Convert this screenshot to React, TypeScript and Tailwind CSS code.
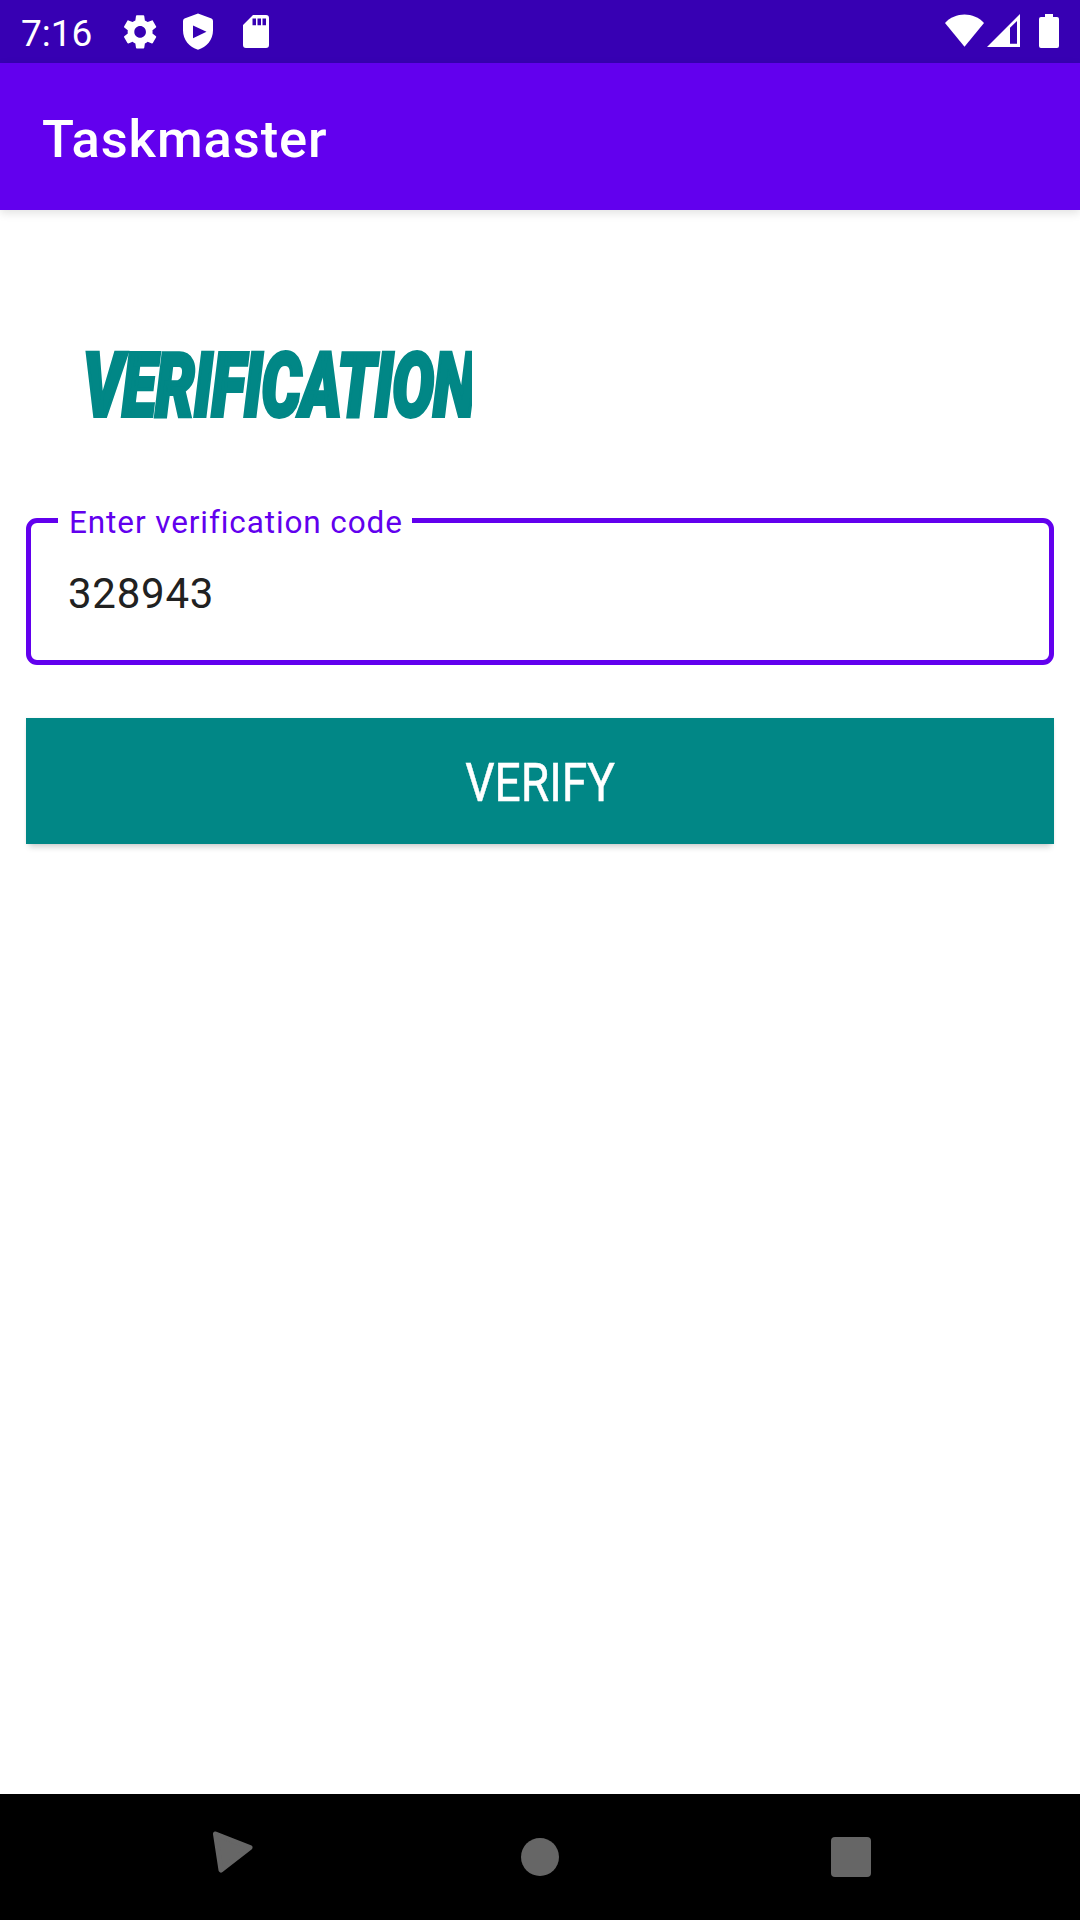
import React from "react";

function StatusBar() {
  return (
    <div className="flex h-[63px] items-center bg-[#3700b3] text-white">
      <div className="flex w-[123px] items-center pl-[21px]">
        <span className="relative top-[2px] text-[37px] leading-none">7:16</span>
      </div>
      <svg className="h-[63px] w-[160px]" viewBox="123 0 160 63" fill="currentColor">
        <g transform="translate(120.2 12) scale(1.66)">
          <path d="M19.43 12.98c.04-.32.07-.64.07-.98s-.03-.66-.07-.98l2.11-1.65c.19-.15.24-.42.12-.64l-2-3.46c-.12-.22-.39-.3-.61-.22l-2.49 1c-.52-.4-1.08-.73-1.69-.98l-.38-2.65C14.46 2.18 14.25 2 14 2h-4c-.25 0-.46.18-.49.42l-.38 2.65c-.61.25-1.17.59-1.69.98l-2.49-1c-.23-.09-.49 0-.61.22l-2 3.46c-.13.22-.07.49.12.64l2.11 1.65c-.04.32-.07.65-.07.98s.03.66.07.98l-2.11 1.65c-.19.15-.24.42-.12.64l2 3.46c.12.22.39.3.61.22l2.49-1c.52.4 1.08.73 1.69.98l.38 2.65c.03.24.24.42.49.42h4c.25 0 .46-.18.49-.42l.38-2.65c.61-.25 1.17-.59 1.69-.98l2.49 1c.23.09.49 0 .61-.22l2-3.46c.12-.22.07-.49-.12-.64l-2.11-1.65zM12 15.5c-1.93 0-3.5-1.57-3.5-3.5s1.57-3.5 3.5-3.5 3.5 1.57 3.5 3.5-1.57 3.5-3.5 3.5z" />
        </g>
        <path
          fillRule="evenodd"
          d="M198 13.5 L211.5 18.6 Q213 19.3 213 21 V30.5 C213 39.5 206.5 47.5 198 49.7 C189.5 47.5 183 39.5 183 30.5 V21 Q183 19.3 184.5 18.6 Z M193 25.4 V38.2 L206.5 31.8 Z"
        />
        <path
          fillRule="evenodd"
          d="M253 15 H266 Q269 15 269 18 V45 Q269 48 266 48 H246 Q243 48 243 45 V25 Z M252.5 18.5 V25.3 H256 V18.5 Z M257.5 18.5 V25.3 H261 V18.5 Z M262.5 18.5 V25.3 H266 V18.5 Z"
        />
      </svg>
      <svg className="ml-auto h-[63px] w-[160px]" viewBox="920 0 160 63" fill="currentColor">
        <path d="M945 23 C955 11.5 974 11.5 984 23 L964.5 46.8 Z" />
        <path fillRule="evenodd" d="M987 47 L1020 14 V47 Z M1010 27.8 V43.8 H1017 V21 Z" />
        <path d="M1045 14 H1053 V17 H1057 Q1059 17 1059 19 V46 Q1059 48 1057 48 H1041 Q1039 48 1039 46 V19 Q1039 17 1041 17 H1045 Z" />
      </svg>
    </div>
  );
}

function VerificationField() {
  return (
    <fieldset className="h-[163px] rounded-[11px] border-[5px] border-[#6200ee] pl-[27px]">
      <legend className="h-[37px] pr-[9px] pl-[11px] text-[31.5px] leading-[37px] tracking-[0.9px] whitespace-nowrap text-[#6200ee]">
        <span className="relative top-[2px]">Enter verification code</span>
      </legend>
      <div className="pt-[30px] pl-[10px] text-[42px] leading-[49px] tracking-[0.75px] text-[#212121]">
        328943
      </div>
    </fieldset>
  );
}

function NavigationBar() {
  return (
    <nav className="h-[126px] bg-black">
      <svg className="h-full w-full" viewBox="0 1794 1080 126" fill="#666666">
        <path
          d="M215.5 1834 L250 1847.5 L221 1870 Z"
          stroke="#666666"
          strokeWidth="5"
          strokeLinejoin="round"
        />
        <circle cx="540" cy="1857" r="19" />
        <rect x="831" y="1837" width="40" height="40" rx="4" />
      </svg>
    </nav>
  );
}

export default function App() {
  return (
    <div className="flex h-[1920px] w-[1080px] flex-col overflow-hidden bg-white font-['Roboto',sans-serif]">
      <StatusBar />
      <header className="flex h-[147px] items-center bg-[#6200ee] pl-[42px] shadow-[0_3px_9px_rgba(0,0,0,0.12)]">
        <h1 className="relative top-[3px] text-[52.5px] leading-none font-medium tracking-[0.9px] text-white">
          Taskmaster
        </h1>
      </header>
      <main className="flex flex-1 flex-col px-[26px] pt-[130px]">
        <div className="ml-[57px] h-[90px] w-[389px] [clip-path:inset(0)]">
          <h2 className="w-max origin-left scale-x-[0.7] text-[89px] leading-[92px] font-black tracking-[-1px] whitespace-nowrap text-[#018786] italic [-webkit-text-stroke:4px_#018786]">
            VERIFICATION
          </h2>
        </div>
        <div className="mt-[72px]">
          <VerificationField />
        </div>
        <button className="mt-[53px] flex h-[126px] w-full items-center justify-center bg-[#018786] text-white shadow-[0_6px_6px_-3px_rgba(0,0,0,0.18),0_0_3px_rgba(0,0,0,0.06)]">
          <span className="relative top-[2px] block scale-x-[0.87] text-[53px] leading-none [-webkit-text-stroke:0.5px_white]">VERIFY</span>
        </button>
      </main>
      <NavigationBar />
    </div>
  );
}
